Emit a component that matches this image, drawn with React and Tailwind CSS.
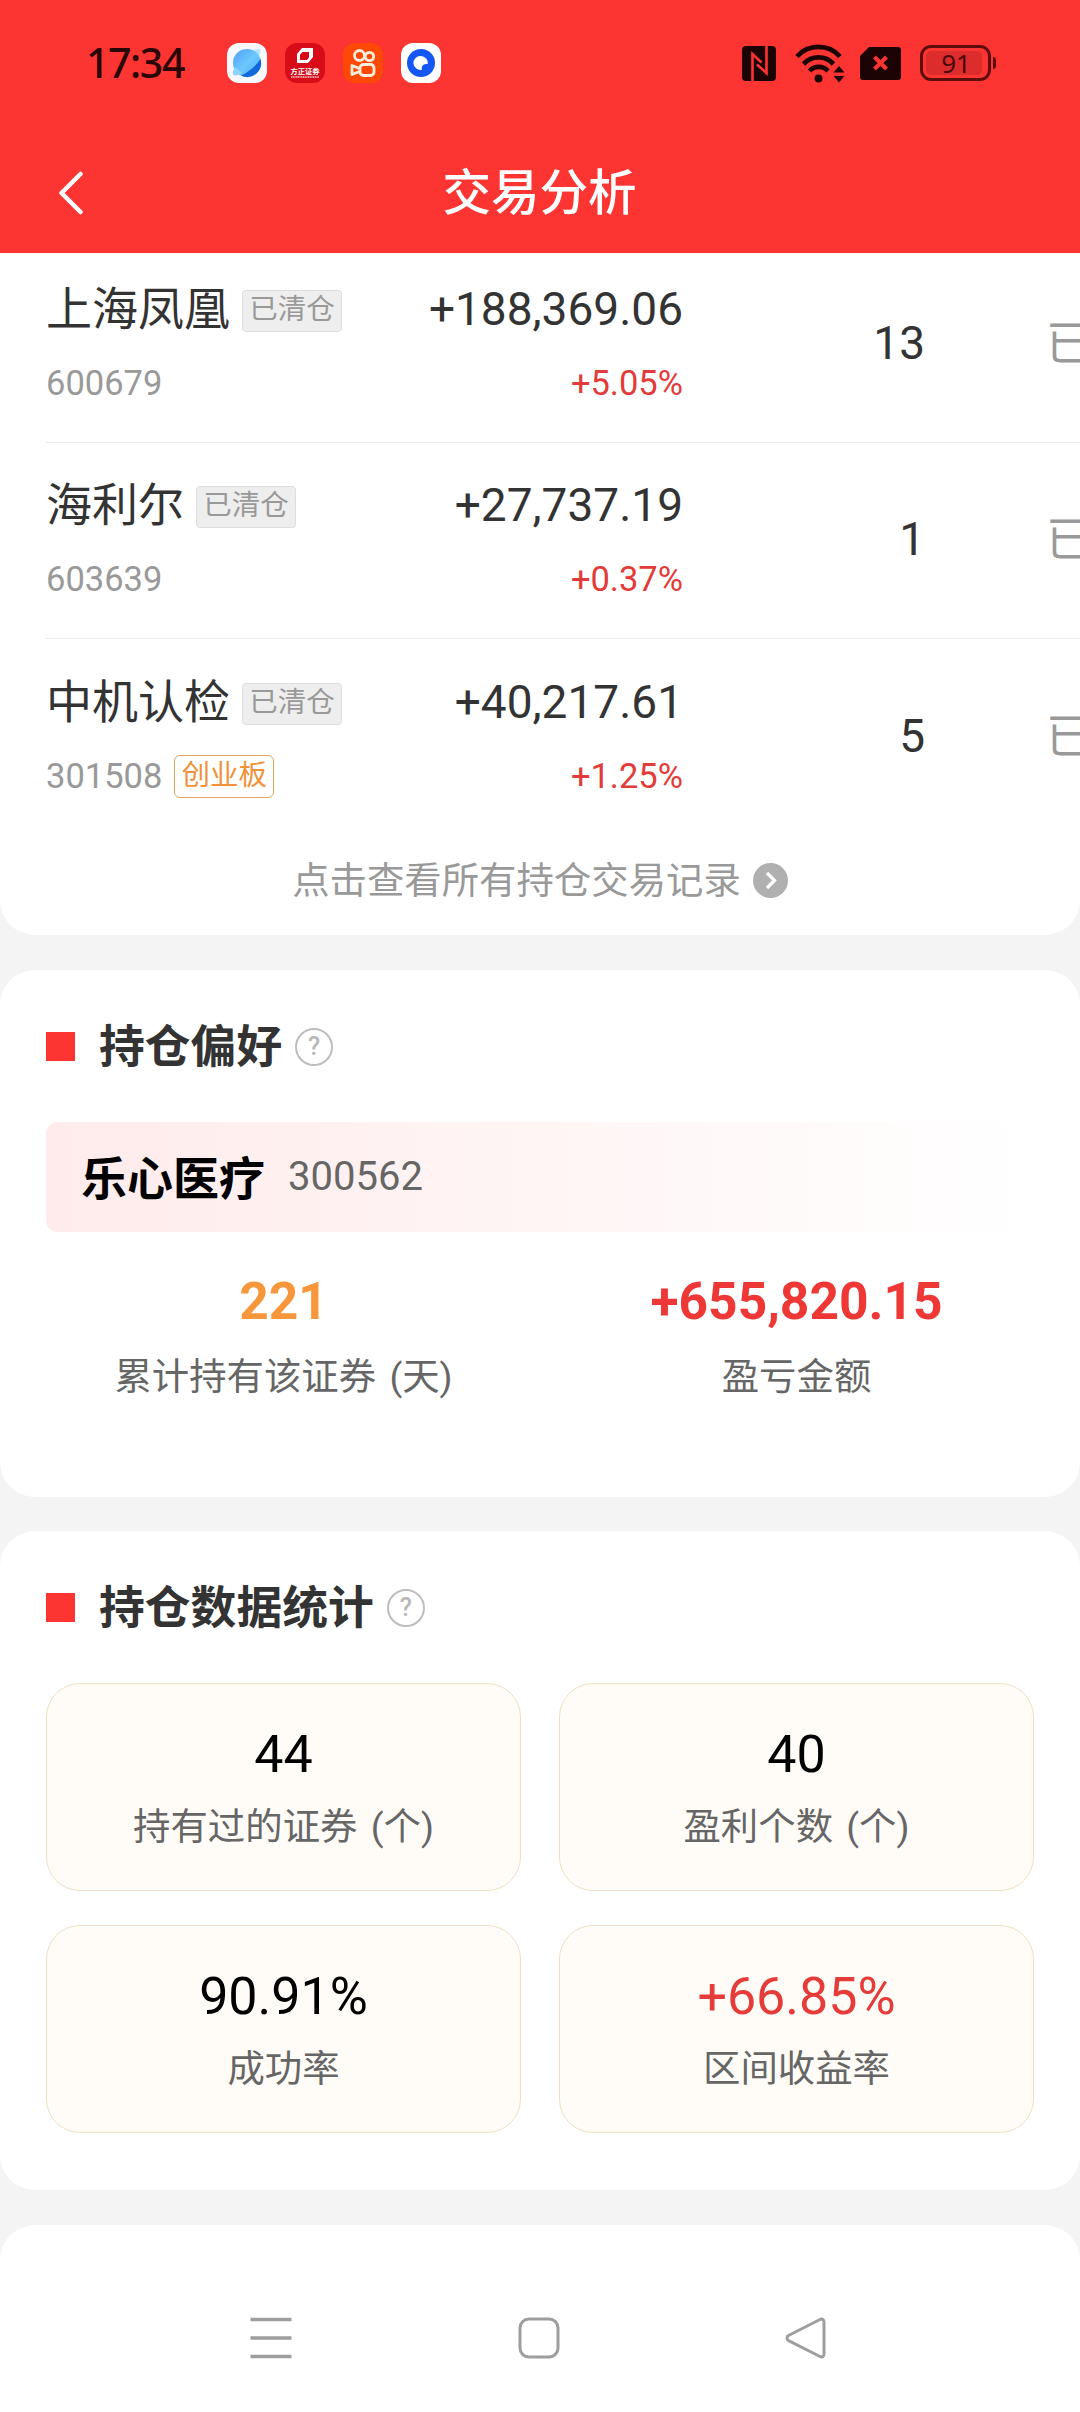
import React from "react";

const holdings = [
  { name: "上海凤凰", code: "600679", profit: "+188,369.06", rate: "+5.05%", count: "13" },
  { name: "海利尔", code: "603639", profit: "+27,737.19", rate: "+0.37%", count: "1" },
  { name: "中机认检", code: "301508", board: "创业板", profit: "+40,217.61", rate: "+1.25%", count: "5" },
];

const stats = [
  { value: "44", label: "持有过的证券 (个)" },
  { value: "40", label: "盈利个数 (个)" },
  { value: "90.91%", label: "成功率" },
  { value: "+66.85%", label: "区间收益率", up: true },
];

function StatusBar() {
  return (
    <div className="flex h-[126px] items-center justify-between pl-[86px] pr-[84px]">
      <div className="flex items-center">
        <span className="w-[141px] pb-0.5 font-['Noto_Sans',sans-serif] text-[41px] font-medium leading-none tracking-[-1.4px] text-[#2a0505]">17:34</span>
        <div className="flex gap-[18px]">
          <svg className="size-10" viewBox="0 0 40 40">
            <defs>
              <linearGradient id="planet" x1="0" y1="0" x2="1" y2="1">
                <stop offset="0" stopColor="#4f9df8" />
                <stop offset="0.5" stopColor="#6cc8fd" />
                <stop offset="1" stopColor="#4aaef8" />
              </linearGradient>
            </defs>
            <rect width="40" height="40" rx="12" fill="#f6f8fb" />
            <path d="M7 33C4 30 7 25 12 19C18 12 27 6 32 6c3 1 1 6-2 10" fill="#b5e2fd" />
            <circle cx="20" cy="20" r="14" fill="url(#planet)" />
            <path d="M33.5 16A14 14 0 0 1 14 32.600C22 29 29 23 33.500 16z" fill="#1468de" />
            <path d="M6 29c0 3 2 4 5 3l4-2-7-6z" fill="#8ed4fd" />
          </svg>
          <svg className="size-10" viewBox="0 0 40 40">
            <rect width="40" height="40" rx="12" fill="#d80c18" />
            <path fillRule="evenodd" d="M17 5h11v9l-5 6H12V11zM17.500 9H24v5.500L22 17h-7v-5.500z" fill="#fff" />
            <text x="20" y="31" textAnchor="middle" fontSize="7.3" fontWeight="700" fill="#fff" fontFamily="Noto Sans CJK SC, sans-serif">方正证券</text>
            <path d="M6 34h28" stroke="#fff" strokeWidth="1.400" strokeDasharray="1.200 0.500" opacity="0.8" />
          </svg>
          <svg className="size-10" viewBox="0 0 40 40" fill="none" stroke="#ffeedd" strokeWidth="2.800" strokeLinejoin="round">
            <rect width="40" height="40" rx="12" fill="#fe4906" stroke="none" />
            <circle cx="16.500" cy="12.500" r="5" />
            <circle cx="26.500" cy="13.500" r="4.200" />
            <rect x="17" y="21.500" width="14" height="11" rx="3.500" />
            <path d="M16.500 25.500l-7.500-3v9l7.500-3" />
          </svg>
          <svg className="size-10" viewBox="0 0 40 40">
            <rect width="40" height="40" rx="12" fill="#fff" />
            <circle cx="20" cy="20" r="14" fill="#1557f5" />
            <path d="M20 13a7 7 0 1 0 1 13.800C20 23 22 21 26.800 21A7 7 0 0 0 20 13z" fill="#fff" />
          </svg>
        </div>
      </div>

      <div className="flex items-center text-[#1c0404]">
        <svg className="h-[35px] w-[34px]" viewBox="0 0 34 35">
          <rect width="34" height="35" rx="4" fill="currentColor" />
          <path d="M10.500 35V8L19.500 16.500M24.500 0V27L15 18.500" fill="none" stroke="#fc3432" strokeWidth="2.600" />
        </svg>
        <svg className="ml-[19px] h-[40px] w-[51px]" viewBox="0 0 51 40" fill="none" stroke="currentColor" strokeWidth="4.800">
          <path d="M2 13.500a29 29 0 0 1 43 0" />
          <path d="M8.500 21a20.500 20.500 0 0 1 30 0" />
          <path d="M14.500 28a12.500 12.500 0 0 1 18.500 0" />
          <circle cx="23.500" cy="35.500" r="4" fill="currentColor" stroke="none" />
          <path d="M38.500 29.500l5.500-6.500 5.500 6.500zM38.500 33l5.500 6.500 5.500-6.500z" fill="currentColor" stroke="none" />
        </svg>
        <svg className="ml-[14px] h-[33px] w-[41px]" viewBox="0 0 41 33">
          <path d="M9 0h29a3 3 0 0 1 3 3v27a3 3 0 0 1-3 3H3a3 3 0 0 1-3-3V9z" fill="currentColor" />
          <path d="M14.500 10l12 12M26.500 10l-12 12" stroke="#fc3432" strokeWidth="4" />
        </svg>
        <div className="ml-[19px] flex h-9 w-[71px] rounded-[11px] border-[3px] border-[#5e0d0d] p-[3px]">
          <span className="flex w-[56px] items-center justify-center rounded-[5px] bg-[#dc2d2c] pl-1 font-['Noto_Sans',sans-serif] text-[26px] leading-none text-[#4a0808]">91</span>
        </div>
        <span className="ml-0.5 h-3 w-[3px] rounded-r bg-[#5e0d0d]" />
      </div>
    </div>
  );
}

function HelpIcon() {
  return (
    <span className="ml-[13px] mt-px flex size-[38px] items-center justify-center rounded-full border-[2.500px] border-[#bdbdbd] text-[25px] font-medium leading-none text-[#b8b8b8]">?</span>
  );
}

function SectionTitle({ children }) {
  return (
    <div className="flex h-[46px] items-center">
      <span className="size-[29px] bg-[#fc3432]" />
      <h2 className="ml-6 pt-1 text-[45.8px] font-bold leading-[46px] text-[#333]">{children}</h2>
      <HelpIcon />
    </div>
  );
}

function HoldingRow({ item, first, last }) {
  return (
    <div
      className={`ml-[46px] flex flex-col justify-end pb-[38px] ${first ? "h-[190px]" : "h-[196px]"} ${
        last ? "" : "border-b border-[#ebebeb]"
      }`}
    >
      <div className="flex items-center">
        <div className="flex w-[380px] flex-col gap-[29px]">
          <div className="flex h-12 items-center">
            <span className="text-[46px] leading-[48px]">{item.name}</span>
            <span className="ml-3 mt-1 flex h-[42px] w-[100px] items-center justify-center rounded border border-[#ddd] bg-[#eee] pb-px text-[28.5px] leading-none text-[#999]">
              已清仓
            </span>
          </div>
          <div className="flex h-[42px] items-center">
            <span className="text-[34.5px] leading-[42px] text-[#999]">{item.code}</span>
            {item.board && (
              <span className="ml-3 flex h-[43px] w-[100px] items-center justify-center rounded-md border-[1.500px] border-[#e5a35c] text-[28.5px] leading-none text-[#f0923a]">
                {item.board}
              </span>
            )}
          </div>
        </div>
        <div className="flex w-[257px] flex-col gap-[29px] text-right">
          <span className="text-[46px] leading-[48px]">{item.profit}</span>
          <span className="text-[34.5px] leading-[42px] text-[#e23c3a]">{item.rate}</span>
        </div>
        <span className="w-[242px] pb-[3px] text-right text-[46px] leading-none">{item.count}</span>
        <span className="ml-[121px] w-[34px] overflow-hidden whitespace-nowrap pb-[3px] text-[46px] leading-[60px] text-[#999]">已清仓</span>
      </div>
    </div>
  );
}

export default function App() {
  return (
    <div className="flex h-[2412px] w-[1080px] flex-col overflow-hidden bg-[#f4f4f4] font-['Roboto','Noto_Sans_CJK_SC',sans-serif] text-[#333]">
      <header className="h-[253px] shrink-0 bg-[#fc3432]">
        <StatusBar />
        <div className="flex h-[127px] items-center pl-[58px] pr-[85px] pt-[6px]">
          <svg className="h-[44px] w-[26px]" viewBox="0 0 26 44" fill="none" stroke="#fff" strokeWidth="4.500" strokeLinecap="round" strokeLinejoin="round">
            <path d="M22.500 3L3.500 22l19 19" />
          </svg>
          <h1 className="flex-1 pt-1 text-center text-[48.5px] font-medium leading-none text-white">交易分析</h1>
        </div>
      </header>

      <section className="h-[682px] shrink-0 rounded-b-[35px] bg-white">
        {holdings.map((item, i) => (
          <HoldingRow key={item.code} item={item} first={i === 0} last={i === holdings.length - 1} />
        ))}
        <div className="mt-[22px] flex h-[46px] items-center justify-center">
          <span className="pt-[3px] text-[37.4px] leading-none text-[#999]">点击查看所有持仓交易记录</span>
          <svg className="ml-3 size-[35px]" viewBox="0 0 35 35">
            <circle cx="17.500" cy="17.500" r="17.500" fill="#b0b0b0" />
            <path d="M14 10l7.500 7.500L14 25" fill="none" stroke="#fff" strokeWidth="3.200" />
          </svg>
        </div>
      </section>

      <section className="mt-[35px] h-[527px] shrink-0 rounded-[35px] bg-white px-[46px] pt-[53px]">
        <SectionTitle>持仓偏好</SectionTitle>
        <div className="mt-[53px] flex h-[110px] items-center rounded-xl bg-linear-to-r from-[#ffebeb] to-white pl-[35px]">
          <span className="pt-[3px] text-[46px] font-bold leading-none text-black">乐心医疗</span>
          <span className="ml-[23px] text-[40px] leading-none text-[#666]">300562</span>
        </div>
        <div className="mt-[43px] grid grid-cols-2 gap-x-[38px] text-center">
          <div>
            <div className="text-[51.5px] font-bold leading-[54px] text-[#f7963a]">221</div>
            <div className="mt-[25px] text-[37.4px] leading-[46px] text-[#666] [word-spacing:4px]">累计持有该证券 (天)</div>
          </div>
          <div>
            <div className="text-[51.5px] font-bold leading-[54px] text-[#ed3835]">+655,820.15</div>
            <div className="mt-[25px] text-[37.4px] leading-[46px] text-[#666]">盈亏金额</div>
          </div>
        </div>
      </section>

      <section className="mt-[34px] h-[659px] shrink-0 rounded-[35px] bg-white px-[46px] pt-[53px]">
        <SectionTitle>持仓数据统计</SectionTitle>
        <div className="mt-[53px] grid grid-cols-2 gap-x-[38px] gap-y-[34px]">
          {stats.map((s) => (
            <div key={s.label} className="h-[208px] rounded-[34px] border border-[#f0e0c2] bg-[#fffcf7] pt-[44px] text-center">
              <div className={`text-[52px] leading-[54px] ${s.up ? "text-[#e53b39]" : "text-black"}`}>{s.value}</div>
              <div className="mt-[22px] text-[37.4px] leading-[46px] text-[#666] [word-spacing:4px]">{s.label}</div>
            </div>
          ))}
        </div>
      </section>

      {/* top of the next card, with the system navigation keys on it */}
      <footer className="mt-[35px] flex h-[187px] shrink-0 items-center justify-between rounded-t-[35px] bg-white pb-0 pl-[250px] pr-[253px] pt-[38px]">
        <svg className="size-[42px]" viewBox="0 0 42 42" stroke="#9e9e9e" strokeWidth="3.500" fill="none">
          <path d="M0.500 2.500h41M0.500 21h41M0.500 39.500h41" />
        </svg>
        <svg className="size-[42px]" viewBox="0 0 42 42" stroke="#9e9e9e" strokeWidth="3" fill="none">
          <rect x="2" y="2" width="38" height="38" rx="9" />
        </svg>
        <svg className="size-[42px]" viewBox="0 0 42 42" stroke="#9e9e9e" strokeWidth="3" fill="none" strokeLinejoin="round">
          <path d="M35 2.500L3.500 18.500a3 3 0 0 0 0 5.200L35 39.500q4 1.500 4-3v-31q0-4.500-4-3z" />
        </svg>
      </footer>
    </div>
  );
}
